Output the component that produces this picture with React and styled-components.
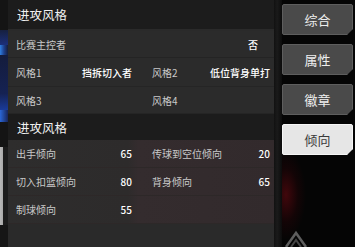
import React from "react";
import styled, { createGlobalStyle } from "styled-components";

const Global = createGlobalStyle`
  html, body { margin: 0; padding: 0; background: #0c0c0c; }
  body { width: 355px; height: 247px; overflow: hidden; font-family: "Noto Sans CJK SC", "Noto Sans", sans-serif; }
`;

const Screen = styled.div`
  display: flex;
  width: 355px;
  height: 247px;
  background: #0b0b0b;
`;

const EdgeStrip = styled.div`
  width: 8px;
  flex: none;
  display: flex;
  flex-direction: column;
  background: #151515;
`;

const EdgeBlock = styled.div`
  height: ${(p) => p.$h}px;
  background: ${(p) => p.$bg};
`;

const Panel = styled.div`
  width: 266px;
  flex: none;
  background: #2a2a2a;
  display: flex;
  flex-direction: column;
`;

const SectionHeader = styled.div`
  height: ${(p) => p.$h}px;
  flex: none;
  display: flex;
  align-items: center;
  padding-left: 9px;
  background: #1c1c1c;
  color: #f2f2f2;
  font-size: 12.5px;
  margin-bottom: ${(p) => p.$mb}px;
`;

const SingleRow = styled.div`
  height: 26px;
  display: flex;
  align-items: center;
  justify-content: space-between;
  padding: 0 16px 0 8px;
  background: #2b2b2b;
  border-bottom: 1px solid #242424;
`;

const GridRow = styled.div`
  height: ${(p) => p.$h}px;
  display: grid;
  grid-template-columns: 136px 130px;
  background: ${(p) => (p.$tint ? "linear-gradient(90deg, #2e2d2d 0%, #2d2b2b 45%, #342c2e 49%, #322a2c 100%)" : "#2b2b2b")};
  border-bottom: 1px solid ${(p) => (p.$tint ? "#2d2828" : "#252525")};
`;

const Cell = styled.div`
  display: flex;
  align-items: center;
  justify-content: space-between;
  padding: ${(p) => (p.$right ? "0 4px 0 8px" : "0 12px 0 8px")};
`;

const Label = styled.span`
  font-size: 10px;
  color: #c9c9c9;
`;

const Value = styled.span`
  font-size: 10px;
  color: #ffffff;
  font-weight: 500;
`;

const Gutter = styled.div`
  width: 8px;
  flex: none;
  background: linear-gradient(90deg, #111 0%, #1a1a1a 40%, #0c0c0c 100%);
`;

const TabColumn = styled.div`
  width: 73px;
  flex: none;
  display: flex;
  flex-direction: column;
  gap: 9px;
  padding-top: 4px;
  position: relative;
  background:
    radial-gradient(ellipse 20px 45px at 4px 195px, rgba(85, 8, 14, 0.75), rgba(45, 4, 8, 0.35) 60%, transparent 100%),
    #050505;
`;

const Tab = styled.div`
  width: 71px;
  height: 31px;
  box-sizing: border-box;
  display: flex;
  align-items: center;
  justify-content: center;
  font-size: 13px;
  color: ${(p) => (p.$active ? "#3a3a3a" : "#eeeeee")};
  background: ${(p) => (p.$active ? "#e6e6e6" : "#4a4a4a")};
  border: 1px solid ${(p) => (p.$active ? "#f6f6f6" : "#5e5e5e")};
  border-radius: 2px;
  clip-path: polygon(0 0, 100% 0, 100% calc(100% - 6px), calc(100% - 6px) 100%, 0 100%);
`;

const Mark = styled.svg`
  position: absolute;
  left: 2px;
  bottom: 0;
`;

const topRows = [
  [["风格1", "挡拆切入者"], ["风格2", "低位背身单打"]],
  [["风格3", ""], ["风格4", ""]],
];

const numRows = [
  [["出手倾向", "65"], ["传球到空位倾向", "20"]],
  [["切入扣篮倾向", "80"], ["背身倾向", "65"]],
  [["制球倾向", "55"], ["", ""]],
];

const tabs = ["综合", "属性", "徽章", "倾向"];

export default function App() {
  return (
    <>
      <Global />
      <Screen>
        <EdgeStrip>
          <EdgeBlock $h={30} $bg="#141414" />
          <EdgeBlock $h={15} $bg="linear-gradient(180deg,#16203f,#1c2f7a)" />
          <EdgeBlock $h={10} $bg="linear-gradient(90deg,#2f7fe0 0%,#1d3f8c 50%,#161d3a 100%)" />
          <EdgeBlock $h={55} $bg="linear-gradient(180deg,#141c3c,#152253 70%,#1a3b9a)" />
          <EdgeBlock $h={12} $bg="linear-gradient(90deg,#2a66d6,#18255a)" />
          <EdgeBlock $h={25} $bg="#141414" />
          <EdgeBlock $h={78} $bg="linear-gradient(90deg,#b9b9b9 0,#a8a8a8 3px,#1c1c1c 3px)" />
          <EdgeBlock $h={22} $bg="#161616" />
        </EdgeStrip>
        <Panel>
          <SectionHeader $h={29} $mb={2}>进攻风格</SectionHeader>
          <SingleRow>
            <Label>比赛主控者</Label>
            <Value>否</Value>
          </SingleRow>
          {topRows.map((row, i) => (
            <GridRow key={i} $h={i === 0 ? 28 : 26}>
              {row.map(([l, v], j) => (
                <Cell key={j} $right={j === 1}>
                  <Label>{l}</Label>
                  <Value>{v}</Value>
                </Cell>
              ))}
            </GridRow>
          ))}
          <SectionHeader $h={26} $mb={0}>进攻风格</SectionHeader>
          {numRows.map((row, i) => (
            <GridRow key={i} $h={27} $tint>
              {row.map(([l, v], j) => (
                <Cell key={j} $right={j === 1}>
                  <Label>{l}</Label>
                  <Value>{v}</Value>
                </Cell>
              ))}
            </GridRow>
          ))}
        </Panel>
        <Gutter />
        <TabColumn>
          {tabs.map((t, i) => (
            <Tab key={t} $active={i === 3}>{t}</Tab>
          ))}
          <Mark width="26" height="20" viewBox="0 0 26 20">
            <path d="M2 20 L12 6 L22 20" fill="none" stroke="#5e5e5e" strokeWidth="2.5" />
            <path d="M7 20 L12 13 L17 20" fill="none" stroke="#444" strokeWidth="2" />
          </Mark>
        </TabColumn>
      </Screen>
    </>
  );
}
